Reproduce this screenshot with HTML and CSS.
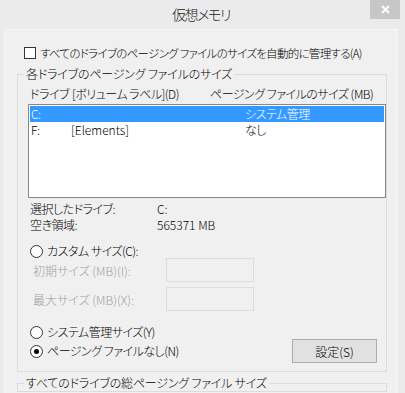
FILE: index.html
```html
<!DOCTYPE html>
<html lang="ja">
<head>
  <meta charset="UTF-8">
  <title>仮想メモリ</title>
  <link rel="stylesheet" href="styles.css">
</head>
<body>

<div class="window">
  <div class="titlebar">
    <span class="title">仮想メモリ</span>
    <span class="close">
      <svg width="9" height="9" viewBox="0 0 9 9"><path d="M1 1 L8 8 M8 1 L1 8" stroke="#fff" stroke-width="2"/></svg>
    </span>
  </div>

  <div class="panel">
    <div class="check-row">
      <span class="checkbox"></span>
      <span class="check-label">すべてのドライブのページング ファイルのサイズを自動的に管理する(A)</span>
    </div>

    <fieldset class="group">
      <legend>各ドライブのページング ファイルのサイズ</legend>

      <div class="list-head">
        <span>ドライブ</span>
        <span>[ボリューム ラベル](D)</span>
        <span>ページング ファイルのサイズ (MB)</span>
      </div>

      <div class="listbox">
        <div class="list-row selected"><span>C:</span><span></span><span>システム管理</span></div>
        <div class="list-row"><span>F:</span><span class="latin">[Elements]</span><span>なし</span></div>
      </div>

      <div class="info">
        <span>選択したドライブ:</span><span class="latin">C:</span>
        <span>空き領域:</span><span class="latin">565371 MB</span>
      </div>

      <div class="radio-row custom"><span class="radio"></span>カスタム サイズ(C):</div>

      <div class="size-row first">
        <span class="size-label">初期サイズ (MB)(I):</span>
        <span class="size-input"></span>
      </div>
      <div class="size-row">
        <span class="size-label">最大サイズ (MB)(X):</span>
        <span class="size-input"></span>
      </div>

      <div class="radio-row system"><span class="radio"></span>システム管理サイズ(Y)</div>
      <div class="last-row">
        <div class="radio-row"><span class="radio checked"></span>ページング ファイルなし(N)</div>
        <button class="btn">設定(S)</button>
      </div>
    </fieldset>

    <fieldset class="group total">
      <legend>すべてのドライブの総ページング ファイル サイズ</legend>
    </fieldset>
  </div>
</div>

</body>
</html>
```

FILE: styles.css
```css
* {
  box-sizing: border-box;
}

body {
  margin: 0;
  background: #ebebeb;
  font-family: "Noto Sans CJK JP", sans-serif;
  font-weight: 300;
  font-size: 12px;
  font-feature-settings: "palt" 1;
  letter-spacing: -0.5px;
  color: #000;
  overflow: hidden;
}

.window {
  width: 405px;
  height: 393px;
  padding: 0 7px 0 4px;
  overflow: hidden;
}

.titlebar {
  height: 29px;
  display: flex;
  justify-content: center;
  align-items: center;
  position: relative;
}

.title {
  font-size: 14px;
  letter-spacing: -1.4px;
  line-height: 29px;
  color: #222;
}

.close {
  position: absolute;
  top: 0;
  right: -2px;
  width: 30px;
  height: 19px;
  background: #c7c7c7;
  display: flex;
  justify-content: center;
  align-items: center;
}

.panel {
  background: #f0f0f0;
  border: 1px solid #f7f7f7;
  border-bottom: none;
  height: 364px;
  padding: 15px 10px 0 12px;
  overflow: hidden;
}

.check-row {
  display: flex;
  align-items: center;
  height: 16px;
  line-height: 16px;
  padding-left: 7px;
  white-space: nowrap;
}

.check-label {
  font-size: 11.5px;
  letter-spacing: -0.7px;
}

.checkbox {
  width: 12px;
  height: 12px;
  border: 1px solid #333;
  background: #fff;
  margin-right: 4px;
}

.latin {
  letter-spacing: 0;
}

.group {
  margin: 5px 0 0;
  padding: 4px 9px 8px 10px;
  border: 1px solid #dcdcdc;
  min-width: 0;
}

.group legend {
  padding: 0 2px;
  margin-left: -4px;
  line-height: 16px;
  letter-spacing: -0.2px;
}

.list-head {
  display: grid;
  grid-template-columns: 42px 138px auto;
  height: 16px;
  line-height: 16px;
  padding-left: 2px;
  white-space: nowrap;
}

.listbox {
  margin: 2px -9px 0 0;
  height: 94px;
  background: #fff;
  border: 1px solid #828790;
  padding: 1px;
}

.list-row {
  display: grid;
  grid-template-columns: 40px 174px auto;
  height: 16px;
  line-height: 16px;
  padding-left: 1px;
}

.list-row.selected {
  background: #3399ff;
  color: #fff;
}

.info {
  display: grid;
  grid-template-columns: 127px auto;
  margin-top: 3px;
  line-height: 16px;
  padding-left: 2px;
}

.radio-row {
  display: flex;
  align-items: center;
  height: 16px;
  line-height: 16px;
  padding-left: 2px;
  white-space: nowrap;
}

.radio-row.custom {
  margin-top: 10px;
}

.radio-row.system {
  margin-top: 13px;
}

.radio {
  width: 13px;
  height: 13px;
  border: 1px solid #333;
  border-radius: 50%;
  background: #fff;
  margin-right: 4px;
  display: flex;
  justify-content: center;
  align-items: center;
  flex: none;
}

.radio.checked::after {
  content: "";
  width: 5px;
  height: 5px;
  border-radius: 50%;
  background: #000;
}

.size-row {
  display: flex;
  align-items: center;
  height: 24px;
  margin-top: 5px;
  padding-left: 5px;
  color: #a0a0a0;
  letter-spacing: 0;
}

.size-row.first {
  margin-top: -1px;
}

.size-label {
  width: 133px;
}

.size-input {
  width: 88px;
  height: 24px;
  border: 1px solid #dcdcdc;
  background: #f0f0f0;
}

.last-row {
  display: flex;
  justify-content: space-between;
  align-items: center;
  height: 24px;
  margin-top: -1px;
}

.btn {
  width: 85px;
  height: 24px;
  background: #e1e1e1;
  border: 1px solid #adadad;
  font-family: inherit;
  font-weight: 300;
  font-size: 12px;
  font-feature-settings: "palt" 1;
  letter-spacing: 0;
  color: #000;
  padding: 0;
}

.group.total {
  margin-top: 3px;
  height: 17px;
  padding: 0 9px 0 10px;
}
```
